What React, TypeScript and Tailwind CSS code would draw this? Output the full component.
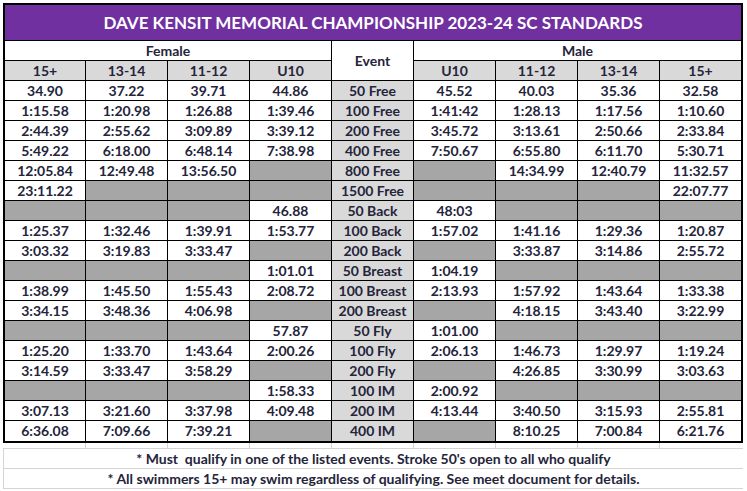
type Cell = string | null;

const rows: { event: string; female: Cell[]; male: Cell[] }[] = [
  { event: "50 Free", female: ["34.90", "37.22", "39.71", "44.86"], male: ["45.52", "40.03", "35.36", "32.58"] },
  { event: "100 Free", female: ["1:15.58", "1:20.98", "1:26.88", "1:39.46"], male: ["1:41:42", "1:28.13", "1:17.56", "1:10.60"] },
  { event: "200 Free", female: ["2:44.39", "2:55.62", "3:09.89", "3:39.12"], male: ["3:45.72", "3:13.61", "2:50.66", "2:33.84"] },
  { event: "400 Free", female: ["5:49.22", "6:18.00", "6:48.14", "7:38.98"], male: ["7:50.67", "6:55.80", "6:11.70", "5:30.71"] },
  { event: "800 Free", female: ["12:05.84", "12:49.48", "13:56.50", null], male: [null, "14:34.99", "12:40.79", "11:32.57"] },
  { event: "1500 Free", female: ["23:11.22", null, null, null], male: [null, null, null, "22:07.77"] },
  { event: "50 Back", female: [null, null, null, "46.88"], male: ["48:03", null, null, null] },
  { event: "100 Back", female: ["1:25.37", "1:32.46", "1:39.91", "1:53.77"], male: ["1:57.02", "1:41.16", "1:29.36", "1:20.87"] },
  { event: "200 Back", female: ["3:03.32", "3:19.83", "3:33.47", null], male: [null, "3:33.87", "3:14.86", "2:55.72"] },
  { event: "50 Breast", female: [null, null, null, "1:01.01"], male: ["1:04.19", null, null, null] },
  { event: "100 Breast", female: ["1:38.99", "1:45.50", "1:55.43", "2:08.72"], male: ["2:13.93", "1:57.92", "1:43.64", "1:33.38"] },
  { event: "200 Breast", female: ["3:34.15", "3:48.36", "4:06.98", null], male: [null, "4:18.15", "3:43.40", "3:22.99"] },
  { event: "50 Fly", female: [null, null, null, "57.87"], male: ["1:01.00", null, null, null] },
  { event: "100 Fly", female: ["1:25.20", "1:33.70", "1:43.64", "2:00.26"], male: ["2:06.13", "1:46.73", "1:29.97", "1:19.24"] },
  { event: "200 Fly", female: ["3:14.59", "3:33.47", "3:58.29", null], male: [null, "4:26.85", "3:30.99", "3:03.63"] },
  { event: "100 IM", female: [null, null, null, "1:58.33"], male: ["2:00.92", null, null, null] },
  { event: "200 IM", female: ["3:07.13", "3:21.60", "3:37.98", "4:09.48"], male: ["4:13.44", "3:40.50", "3:15.93", "2:55.81"] },
  { event: "400 IM", female: ["6:36.08", "7:09.66", "7:39.21", null], male: [null, "8:10.25", "7:00.84", "6:21.76"] },
];

const femaleAges = ["15+", "13-14", "11-12", "U10"];
const maleAges = ["U10", "11-12", "13-14", "15+"];

function TimeCell({ value, last, lastRow }: { value: Cell; last?: boolean; lastRow?: boolean }) {
  return (
    <div
      className={`flex h-[20px] items-center justify-center border-black ${last ? "" : "border-r"} ${
        lastRow ? "" : "border-b"
      } ${value ? "bg-white" : "bg-[#a6a6a6]"}`}
    >
      {value}
    </div>
  );
}

export default function App() {
  return (
    <div
      className="h-[491px] w-[747px] overflow-hidden bg-white pl-[3px] pt-[3px] text-[14px] font-bold text-[#24243a]"
      style={{ fontFamily: "Lato, 'Liberation Sans', sans-serif" }}
    >
      <div className="grid w-[740px] grid-cols-[81px_82px_82px_82px_82px_82px_82px_82px_81px] border-2 border-black leading-none">
        <div className="col-span-9 flex h-[36px] items-center justify-center border-b border-black bg-[#7030a0] text-[17px] text-white">
          DAVE KENSIT MEMORIAL CHAMPIONSHIP 2023-24 SC STANDARDS
        </div>

        <div className="col-span-4 flex h-[20px] items-center justify-center border-r border-b border-black bg-white">
          Female
        </div>
        <div className="row-span-2 flex items-center justify-center border-r border-b border-black bg-white">
          Event
        </div>
        <div className="col-span-4 flex h-[20px] items-center justify-center border-b border-black bg-white">
          Male
        </div>

        {femaleAges.map((a) => (
          <div key={"f" + a} className="flex h-[20px] items-center justify-center border-r border-b border-black bg-[#d9d9d9]">
            {a}
          </div>
        ))}
        {maleAges.map((a, i) => (
          <div
            key={"m" + a}
            className={`flex h-[20px] items-center justify-center border-b border-black bg-[#d9d9d9] ${i < 3 ? "border-r" : ""}`}
          >
            {a}
          </div>
        ))}

        {rows.map((r, ri) => {
          const lastRow = ri === rows.length - 1;
          return [
            ...r.female.map((v, i) => <TimeCell key={`${r.event}f${i}`} value={v} lastRow={lastRow} />),
            <div
              key={`${r.event}e`}
              className={`flex h-[20px] items-center justify-center border-r border-black bg-[#d9d9d9] ${lastRow ? "" : "border-b"}`}
            >
              {r.event}
            </div>,
            ...r.male.map((v, i) => <TimeCell key={`${r.event}m${i}`} value={v} last={i === 3} lastRow={lastRow} />),
          ];
        })}
      </div>

      <div className="grid w-[740px] grid-cols-[83px_82px_82px_82px_82px_82px_82px_82px_83px]">
        {Array.from({ length: 9 }).map((_, i) => (
          <div key={i} className={`h-[5px] border-[#d4d4d4] ${i < 8 ? "border-r" : ""}`} />
        ))}
      </div>
      <div className="w-[740px] border-t border-l border-[#d4d4d4]">
        <div className="flex h-[20px] items-center justify-center whitespace-pre border-b border-[#d4d4d4]">
          * Must  qualify in one of the listed events. Stroke 50's open to all who qualify
        </div>
        <div className="flex h-[20px] items-center justify-center border-b border-[#d4d4d4]">
          * All swimmers 15+ may swim regardless of qualifying. See meet document for details.
        </div>
      </div>
    </div>
  );
}
